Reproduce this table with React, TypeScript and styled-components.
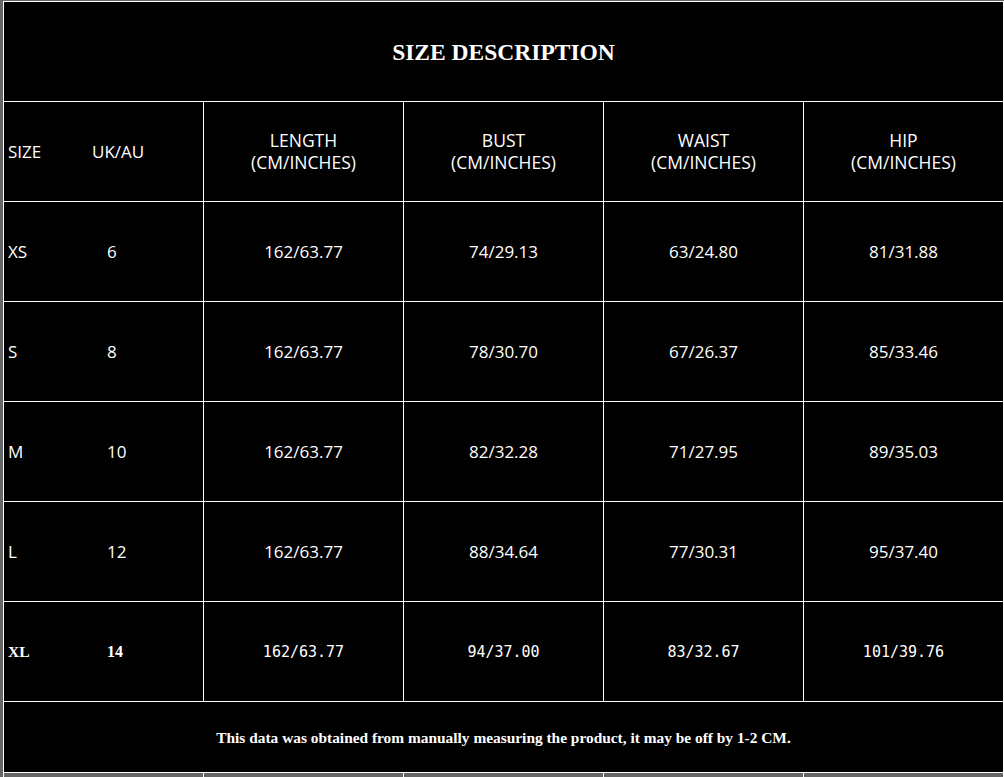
import * as React from 'react'
import styled, { createGlobalStyle } from 'styled-components'

// Data
const rows = [
  { size: 'XS', uk: '6', length: '162/63.77', bust: '74/29.13', waist: '63/24.80', hip: '81/31.88' },
  { size: 'S', uk: '8', length: '162/63.77', bust: '78/30.70', waist: '67/26.37', hip: '85/33.46' },
  { size: 'M', uk: '10', length: '162/63.77', bust: '82/32.28', waist: '71/27.95', hip: '89/35.03' },
  { size: 'L', uk: '12', length: '162/63.77', bust: '88/34.64', waist: '77/30.31', hip: '95/37.40' },
  { size: 'XL', uk: '14', length: '162/63.77', bust: '94/37.00', waist: '83/32.67', hip: '101/39.76', alt: true },
]

const measures = ['LENGTH', 'BUST', 'WAIST', 'HIP']

const GlobalStyle = createGlobalStyle`
  html, body {
    margin: 0;
    background: #666;
    overflow: hidden;
  }
`

const Sheet = styled.div`
  margin: 1px 0 0 3px;
  width: 1001px;
  display: grid;
  grid-template-columns: repeat(5, 199px);
  grid-template-rows: 99px 99px repeat(5, 99px) 70px 40px;
  gap: 1px;
  padding: 1px;
  box-sizing: border-box;
  background: #fff;
  color: #fff;
  font-family: 'Open Sans', 'Noto Sans', sans-serif;
`

const Cell = styled.div<{ $muted?: boolean }>`
  background: ${({ $muted }) => ($muted ? '#666' : '#000')};
  display: flex;
  align-items: center;
  justify-content: center;
  text-align: center;
  font-size: 17px;
`

const WideCell = styled(Cell)`
  grid-column: 1 / -1;
  font-family: 'Liberation Serif', 'Times New Roman', serif;
  font-weight: bold;
`

const Title = styled(WideCell)`
  font-size: 23.5px;
  padding-top: 2px;
`

const Note = styled(WideCell)`
  font-size: 15.4px;
  padding-top: 2px;
`

const SizeCell = styled(Cell)`
  justify-content: flex-start;
  padding-left: 4px;
`

const SizeLabel = styled.span<{ $alt?: boolean }>`
  width: 84px;
  text-align: left;
  ${({ $alt }) => $alt && `font-family: 'Liberation Serif', serif; font-weight: bold; font-size: 15.5px;`}
`

const UkLabel = styled.span<{ $alt?: boolean; $indent?: number }>`
  padding-left: ${({ $indent }) => $indent ?? 0}px;
  ${({ $alt }) => $alt && `font-family: 'Liberation Serif', serif; font-weight: bold; font-size: 16px;`}
`

const HeadText = styled.span`
  line-height: 22px;
  font-size: 17.5px;
  margin-top: -2px;
`

const Value = styled.span<{ $alt?: boolean }>`
  ${({ $alt }) => $alt && `font-family: 'DejaVu Sans Mono', monospace; font-size: 15px;`}
`

const App: React.FC = () => {
  return (
    <>
      <GlobalStyle />
      <Sheet>
        <Title>SIZE DESCRIPTION</Title>

        <SizeCell>
          <SizeLabel>SIZE</SizeLabel>
          <UkLabel>UK/AU</UkLabel>
        </SizeCell>
        {measures.map((m) => (
          <Cell key={m}>
            <HeadText>
              {m}
              <br />
              (CM/INCHES)
            </HeadText>
          </Cell>
        ))}

        {rows.map((r) => (
          <React.Fragment key={r.size}>
            <SizeCell>
              <SizeLabel $alt={r.alt}>{r.size}</SizeLabel>
              <UkLabel $alt={r.alt} $indent={15}>{r.uk}</UkLabel>
            </SizeCell>
            <Cell><Value $alt={r.alt}>{r.length}</Value></Cell>
            <Cell><Value $alt={r.alt}>{r.bust}</Value></Cell>
            <Cell><Value $alt={r.alt}>{r.waist}</Value></Cell>
            <Cell><Value $alt={r.alt}>{r.hip}</Value></Cell>
          </React.Fragment>
        ))}

        <Note>This data was obtained from manually measuring the product, it may be off by 1-2 CM.</Note>

        {[0, 1, 2, 3, 4].map((i) => (
          <Cell key={i} $muted />
        ))}
      </Sheet>
    </>
  )
}

export default App
